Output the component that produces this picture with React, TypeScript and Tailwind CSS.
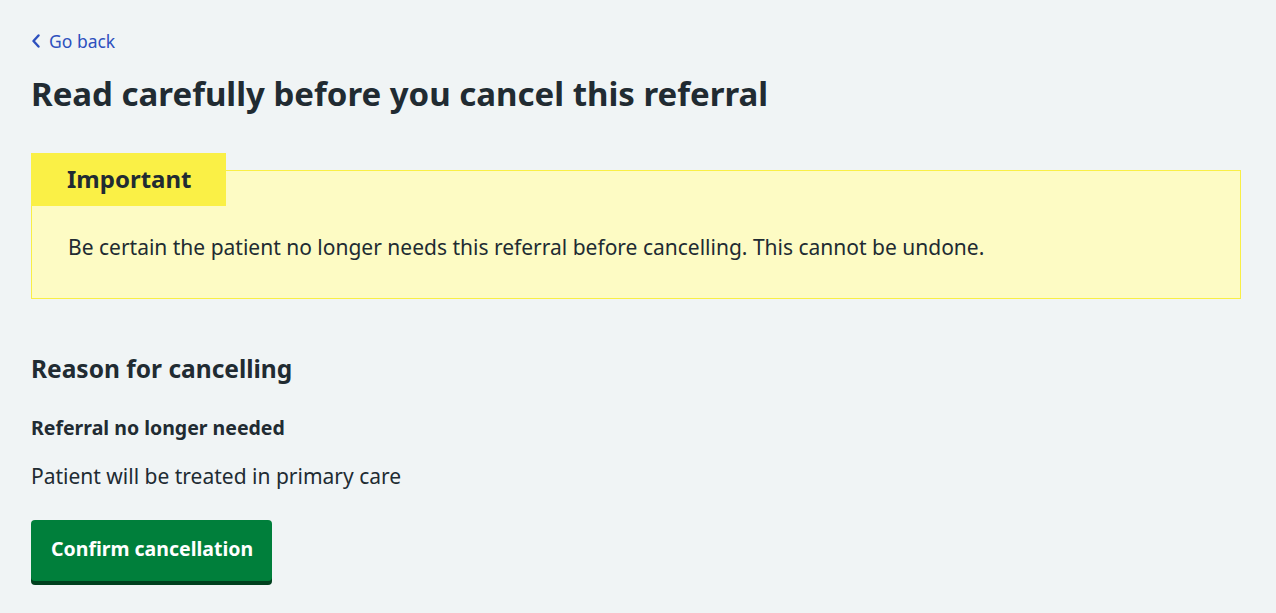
import React from "react";

export default function App() {
  return (
    <div
      className="min-h-screen bg-[#f0f4f5] text-[#212b32]"
      style={{ fontFamily: '"Noto Sans", "Open Sans", sans-serif' }}
    >
      <div className="pl-[31px] pr-[35px] pt-[29px] pb-[20px]">
        <a href="#" className="flex items-center gap-[8px] text-[17.5px] leading-[24px] text-[#2d50be] w-fit">
          <svg width="10" height="14" viewBox="0 0 10 14" className="shrink-0">
            <path d="M7.5 1.5 L2.5 7 L7.5 12.5" fill="none" stroke="currentColor" strokeWidth="2.4" strokeLinecap="round" strokeLinejoin="round" />
          </svg>
          <span>Go back</span>
        </a>

        <h1 className="mt-[21px] text-[33px] leading-[40px] font-bold">
          Read carefully before you cancel this referral
        </h1>

        <div className="mt-[56px] border border-[#f9ef45] bg-[#fdfbc4] pb-[37px]">
          <div className="-mt-[18px] -ml-px w-fit bg-[#faf046] pl-[36px] pr-[35px] pt-[10px] pb-[11px] text-[24px] leading-[32px] font-bold">
            Important
          </div>
          <p className="mt-[27px] pl-[36px] text-[21px] leading-[28px]">
            Be certain the patient no longer needs this referral before cancelling. This cannot be undone.
          </p>
        </div>

        <h2 className="mt-[54px] text-[24.5px] leading-[32px] font-bold">Reason for cancelling</h2>
        <p className="mt-[29px] text-[19.5px] leading-[28px] font-bold">Referral no longer needed</p>
        <p className="mt-[20px] text-[21px] leading-[28px]">Patient will be treated in primary care</p>

        <button className="mt-[30px] rounded-[4px] bg-[#007f3b] pl-[20px] pr-[19px] pt-[15px] pb-[18px] text-[19.5px] leading-[28px] font-bold text-white shadow-[0_4px_0_#00401e]">
          Confirm cancellation
        </button>
      </div>
    </div>
  );
}
